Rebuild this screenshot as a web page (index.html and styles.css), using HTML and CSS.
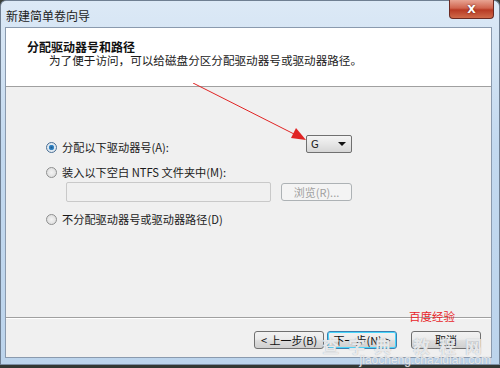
FILE: index.html
```html
<!DOCTYPE html>
<html lang="zh-CN">
<head>
    <meta charset="UTF-8">
    <title>新建简单卷向导</title>
    <link rel="stylesheet" href="styles.css">
</head>
<body>
    <div class="window">
        <div class="titlebar">
            <span class="title">新建简单卷向导</span>
            <button class="close-btn">X</button>
        </div>
        <div class="client">
            <div class="header">
                <h1>分配驱动器号和路径</h1>
                <p>为了便于访问，可以给磁盘分区分配驱动器号或驱动器路径。</p>
            </div>
            <div class="content">
                <div class="option-row first">
                    <span class="radio checked"></span>
                    <span class="label">分配以下驱动器号(A):</span>
                    <div class="dropdown">
                        <span>G</span>
                        <span class="caret"></span>
                    </div>
                </div>
                <div class="option-row">
                    <span class="radio"></span>
                    <span class="label">装入以下空白 NTFS 文件夹中(M):</span>
                </div>
                <div class="folder-row">
                    <div class="text-input"></div>
                    <button class="win-btn browse" disabled>浏览(R)...</button>
                </div>
                <div class="option-row last">
                    <span class="radio"></span>
                    <span class="label">不分配驱动器号或驱动器路径(D)</span>
                </div>
                <svg class="arrow" width="500" height="80" viewBox="0 0 500 80">
                    <line x1="192" y1="0" x2="295" y2="52" stroke="#e02424" stroke-width="1"/>
                    <polygon points="305,57 290,55 295,45" fill="#e02424"/>
                </svg>
            </div>
            <div class="footer">
                <span class="baidu">百度经验</span>
                <button class="win-btn">&lt; 上一步(B)</button>
                <button class="win-btn focused">下一步(N) &gt;</button>
                <button class="win-btn cancel">取消</button>
            </div>
        </div>
        <div class="watermark">
            <div class="wm-big">查字典 教程网</div>
            <div class="wm-small">jiaocheng.chazidian.com</div>
        </div>
    </div>
    <div class="taskbar"></div>
</body>
</html>
```

FILE: styles.css
```css
body {
    margin: 0;
    width: 500px;
    height: 368px;
    overflow: hidden;
    background-color: #3a3f3a;
    font-family: "Noto Sans CJK SC", "Liberation Sans", sans-serif;
    color: #1a1a1a;
}
.window {
    position: relative;
    height: 365px;
    box-sizing: border-box;
    background: linear-gradient(to bottom, #dce9f6, #c3d9ef 40%, #bcd4ec);
    border: 1px solid #6f7f92;
    border-bottom-color: #7d8fa5;
    border-radius: 6px 6px 0 0;
    display: flex;
    flex-direction: column;
    padding: 0 7px 6px 4px;
}
.titlebar {
    height: 26px;
    display: flex;
    align-items: flex-start;
}
.title {
    font-size: 12px;
    line-height: 12px;
    margin: 9px 0 0 1px;
    color: #222;
}
.close-btn {
    margin-left: auto;
    margin-right: -2px;
    width: 45px;
    height: 19px;
    margin-top: -1px;
    border: 1px solid #6b2a22;
    border-top: none;
    border-radius: 0 0 4px 4px;
    background: linear-gradient(to bottom, #e8a493, #d0644e 45%, #b83a24 55%, #cf6a4a);
    color: #fff;
    font-family: "DejaVu Sans", sans-serif;
    font-weight: bold;
    font-size: 11px;
    padding: 0;
    text-shadow: 0 0 2px #5a1a10;
}
.client {
    flex: 1;
    display: flex;
    flex-direction: column;
    border: 1px solid #8a9aae;
    background-color: #f0f0f0;
}
.header {
    height: 58px;
    background-color: #fff;
    border-bottom: 1px solid #a0a0a0;
    padding: 0 0 0 21px;
}
.header h1 {
    margin: 12px 0 0;
    font-size: 12px;
    line-height: 14px;
    font-weight: bold;
    color: #111;
}
.header p {
    margin: -1px 0 0 22px;
    font-size: 11.6px;
    line-height: 14px;
}
.content {
    position: relative;
    flex: 1;
    padding: 51px 0 0 40px;
    border-bottom: 1px solid #a0a0a0;
}
.option-row {
    display: flex;
    align-items: center;
    height: 18px;
    font-size: 11.2px;
}
.option-row + .option-row {
    margin-top: 7px;
}
.option-row.last {
    margin-top: 8px;
}
.radio {
    width: 11px;
    height: 11px;
    box-sizing: border-box;
    border-radius: 50%;
    border: 1px solid #8e8f8f;
    background: radial-gradient(circle, #f4f4f4, #d8d8d8);
    margin-right: 5px;
}
.radio.checked {
    background: radial-gradient(circle, #1d5a8e 0, #3b8fd0 2.5px, #dfe9f2 3px, #e9e9e9);
    border-color: #4a6f95;
}
.dropdown {
    margin-left: auto;
    margin-right: 139px;
    margin-top: -6px;
    width: 46px;
    height: 18px;
    box-sizing: border-box;
    border: 1px solid #707070;
    border-radius: 2px;
    background: linear-gradient(to bottom, #f4f4f4, #e6e6e6 50%, #d6d6d6);
    display: flex;
    align-items: center;
    padding: 0 5px 0 4px;
    font-family: "DejaVu Sans", sans-serif;
    font-size: 10px;
}
.caret {
    margin-left: auto;
    width: 0;
    height: 0;
    border-left: 4px solid transparent;
    border-right: 4px solid transparent;
    border-top: 4px solid #111;
}
.folder-row {
    display: flex;
    margin: 1px 0 0 20px;
}
.text-input {
    width: 205px;
    height: 20px;
    box-sizing: border-box;
    border: 1px solid #c9c9c9;
    border-radius: 2px;
    background-color: #f0f0f0;
}
.win-btn {
    width: 70px;
    height: 18px;
    box-sizing: border-box;
    border: 1px solid #707070;
    border-radius: 3px;
    background: linear-gradient(to bottom, #f2f2f2, #ebebeb 45%, #dddddd 55%, #cfcfcf);
    font-family: "Noto Sans CJK SC", "Liberation Sans", sans-serif;
    font-size: 11px;
    line-height: 14px;
    padding: 0;
    color: #111;
}
.browse {
    width: 71px;
    margin: 1px 0 0 10px;
    border-color: #adb2b5;
    background: #f4f4f4;
    color: #a0a0a0;
}
.arrow {
    position: absolute;
    left: -5px;
    top: -4px;
}
.footer {
    position: relative;
    height: 39px;
    border-top: 1px solid #fff;
    display: flex;
    align-items: flex-start;
    padding: 12px 10px 0 0;
    box-sizing: border-box;
    justify-content: flex-end;
}
.footer .win-btn + .win-btn {
    margin-left: 3px;
}
.footer .cancel {
    margin-left: 14px !important;
}
.focused {
    border-color: #3c7fb1;
    box-shadow: inset 0 0 0 1px #48d5fb;
}
.baidu {
    position: absolute;
    right: 36px;
    top: -11px;
    color: #e8262a;
    font-size: 11.5px;
}
.watermark {
    position: absolute;
    right: 8px;
    bottom: -2px;
    text-align: right;
    color: rgba(255, 255, 255, 0.75);
    text-shadow: 0 0 1px #9aa0a8;
    pointer-events: none;
}
.wm-big {
    font-size: 17px;
    line-height: 17px;
    letter-spacing: 9px;
    font-weight: bold;
}
.wm-small {
    font-family: "Liberation Sans", sans-serif;
    font-size: 12px;
    line-height: 12px;
}
.taskbar {
    height: 3px;
    background-color: #333833;
}
```
